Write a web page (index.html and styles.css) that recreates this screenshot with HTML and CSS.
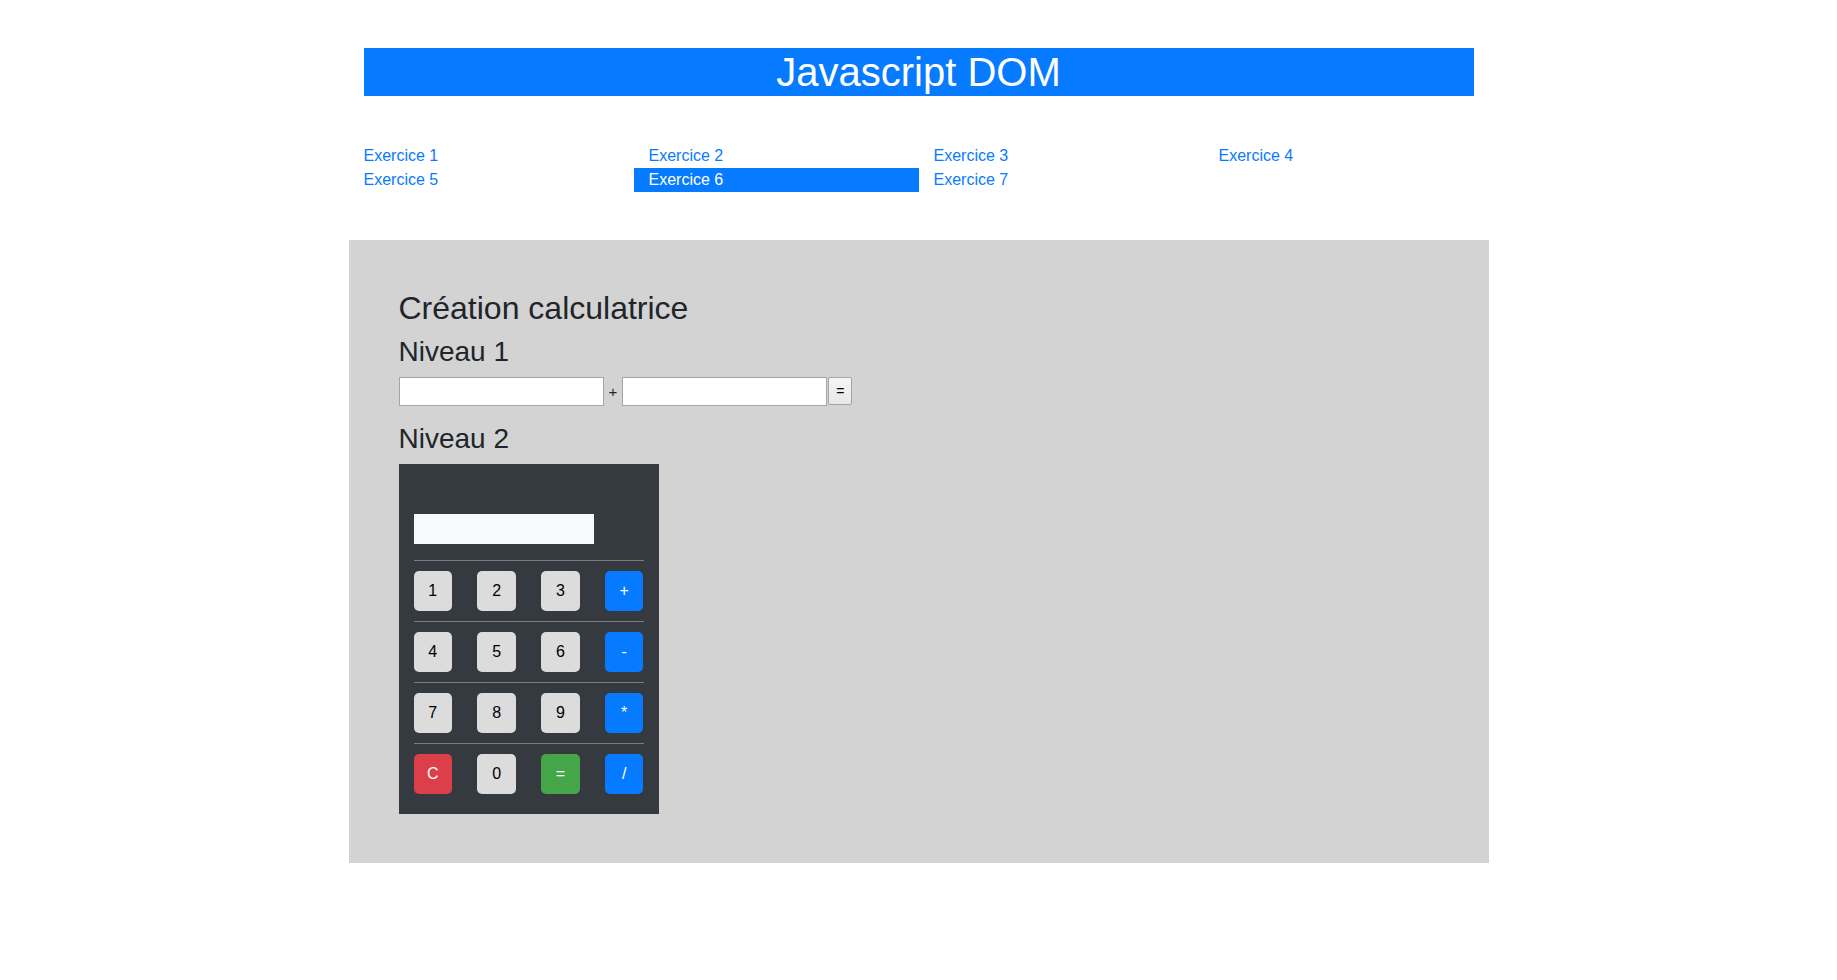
FILE: index.html
```html
<!DOCTYPE html>
<html lang="fr">
<head>
<meta charset="utf-8">
<title>Javascript DOM</title>
<link rel="stylesheet" href="styles.css">
</head>
<body>
<div class="container top">
  <h1 class="title">Javascript DOM</h1>
  <nav class="menu">
    <a class="menu-item" href="#">Exercice 1</a>
    <a class="menu-item" href="#">Exercice 2</a>
    <a class="menu-item" href="#">Exercice 3</a>
    <a class="menu-item" href="#">Exercice 4</a>
    <a class="menu-item" href="#">Exercice 5</a>
    <a class="menu-item active" href="#">Exercice 6</a>
    <a class="menu-item" href="#">Exercice 7</a>
  </nav>
</div>
<div class="container panel">
  <h2 class="h2">Création calculatrice</h2>
  <h3 class="h3">Niveau 1</h3>
  <div class="simple">
    <input class="field" type="text">
    <span class="plus">+</span>
    <input class="field" type="text">
    <button class="eq" type="button">=</button>
  </div>
  <h3 class="h3">Niveau 2</h3>
  <div class="calc">
    <div class="screen"></div>
    <div class="keys">
      <div class="key-row">
        <button class="key" type="button">1</button>
        <button class="key" type="button">2</button>
        <button class="key" type="button">3</button>
        <button class="key op" type="button">+</button>
      </div>
      <div class="key-row">
        <button class="key" type="button">4</button>
        <button class="key" type="button">5</button>
        <button class="key" type="button">6</button>
        <button class="key op" type="button">-</button>
      </div>
      <div class="key-row">
        <button class="key" type="button">7</button>
        <button class="key" type="button">8</button>
        <button class="key" type="button">9</button>
        <button class="key op" type="button">*</button>
      </div>
      <div class="key-row">
        <button class="key clear" type="button">C</button>
        <button class="key" type="button">0</button>
        <button class="key equal" type="button">=</button>
        <button class="key op" type="button">/</button>
      </div>
    </div>
  </div>
</div>
</body>
</html>
```

FILE: styles.css
```css
* { box-sizing: border-box; }

body {
  margin: 0;
  font-family: "Liberation Sans", Arial, Helvetica, sans-serif;
  font-size: 16px;
  line-height: 1.5;
  color: #212529;
  background: #fff;
}

.container {
  width: 1140px;
  margin: 0 auto;
  padding: 0 15px;
}

.top {
  padding-top: 48px;
}

.title {
  margin: 0 0 8px;
  background: #077bff;
  color: #fff;
  text-align: center;
  font-size: 40px;
  font-weight: 400;
  line-height: 48px;
}

.menu {
  display: grid;
  grid-template-columns: repeat(4, 1fr);
  margin: 48px -15px 0;
}

.menu-item {
  display: block;
  padding: 0 15px;
  line-height: 24px;
  color: #077bff;
  text-decoration: none;
}

.menu-item.active {
  background: #077bff;
  color: #fff;
}

.panel {
  margin-top: 48px;
  background: #d3d3d3;
  padding: 49px 50px 49px 50px;
}

.h2 {
  margin: 0 0 8px;
  font-size: 32px;
  font-weight: 400;
  line-height: 1.2;
}

.h3 {
  margin: 0 0 8px;
  font-size: 28px;
  font-weight: 400;
  line-height: 1.2;
}

.simple {
  display: flex;
  align-items: center;
  height: 29px;
  margin-bottom: 16px;
}

.field {
  width: 205px;
  height: 29px;
  margin: 0;
  border: 1px solid #a5a5a5;
  background: #fff;
  padding: 1px 2px;
  font: inherit;
}

.plus {
  padding: 0 5px;
  font-size: 15px;
  line-height: 29px;
}

.eq {
  width: 24px;
  height: 28px;
  margin: 0 0 0 1px;
  padding: 0;
  border: 1px solid #a5a5a5;
  border-radius: 2px;
  background: linear-gradient(#f5f5f5, #e8e8e8);
  font-family: inherit;
  font-size: 14px;
  color: #000;
}

.calc {
  width: 260px;
  background: #343a40;
  padding: 50px 15px 10px;
}

.screen {
  width: 180px;
  height: 30px;
  background: #f8f9fa;
  margin-bottom: 16px;
}

.key-row {
  display: flex;
  justify-content: space-between;
  border-top: 1px solid #7d7d7d;
  padding: 10px 0;
}

.key {
  width: 38.5px;
  height: 40px;
  margin: 0;
  padding: 0;
  border: 0;
  border-radius: 5px;
  background: #dcdcdc;
  color: #000;
  font-family: inherit;
  font-size: 16px;
  line-height: 40px;
  text-align: center;
}

.key.op {
  background: #077bff;
  color: #fff;
}

.key.clear {
  background: #dc3f4a;
  color: #fff;
}

.key.equal {
  background: #45a649;
  color: #fff;
}
```
